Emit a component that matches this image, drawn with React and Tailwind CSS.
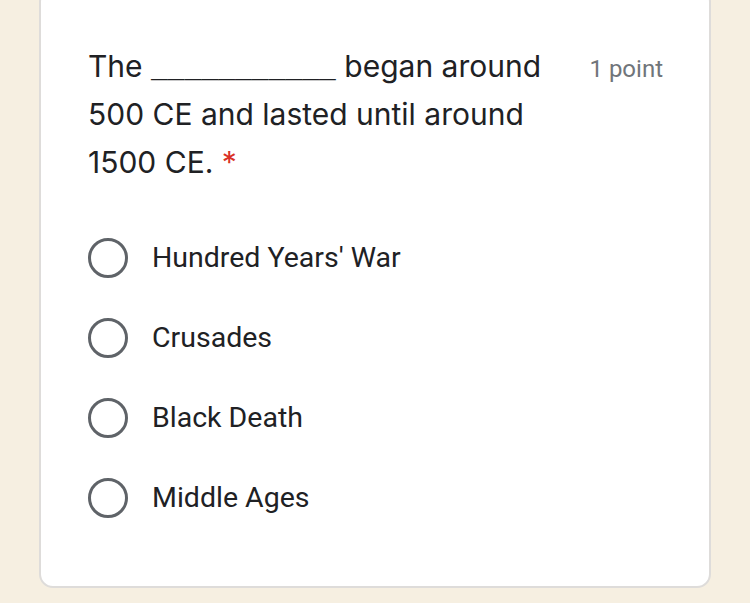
import React from 'react';

const options = ["Hundred Years' War", 'Crusades', 'Black Death', 'Middle Ages'];

function Radio() {
  return <span className="block h-[40px] w-[40px] shrink-0 rounded-full border-[3px] border-[#5f6368]" />;
}

export default function App() {
  return (
    <div className="h-[603px] w-[750px] overflow-hidden bg-[#f6efe1] px-[39px]">
      <div className="-mt-[12px] h-[600px] rounded-[14px] border-2 border-[#dedcda] bg-white pl-[47px] pr-[46px] pt-[52px]">
        <div className="flex items-start justify-between">
          <p className="w-[470px] text-[30px] leading-[48px] text-[#202124]" style={{ fontFamily: 'Inter, sans-serif' }}>
            The{' '}
            <span className="text-[28px] leading-none" style={{ fontFamily: '"Liberation Mono", monospace' }}>
              ___________
            </span>{' '}
            began around 500 CE and lasted until around 1500 CE.{' '}
            <span className="text-[#d93025]">*</span>
          </p>
          <span className="mt-[9px] text-[24px] text-[#70757a]" style={{ fontFamily: 'Roboto, sans-serif' }}>
            1 point
          </span>
        </div>
        <ul className="mt-[52px] flex flex-col gap-[40px]">
          {options.map((o) => (
            <li key={o} className="flex h-[40px] items-center gap-[24px]">
              <Radio />
              <span className="text-[28.5px] leading-[40px] text-[#202124]" style={{ fontFamily: 'Roboto, sans-serif' }}>
                {o}
              </span>
            </li>
          ))}
        </ul>
      </div>
    </div>
  );
}
